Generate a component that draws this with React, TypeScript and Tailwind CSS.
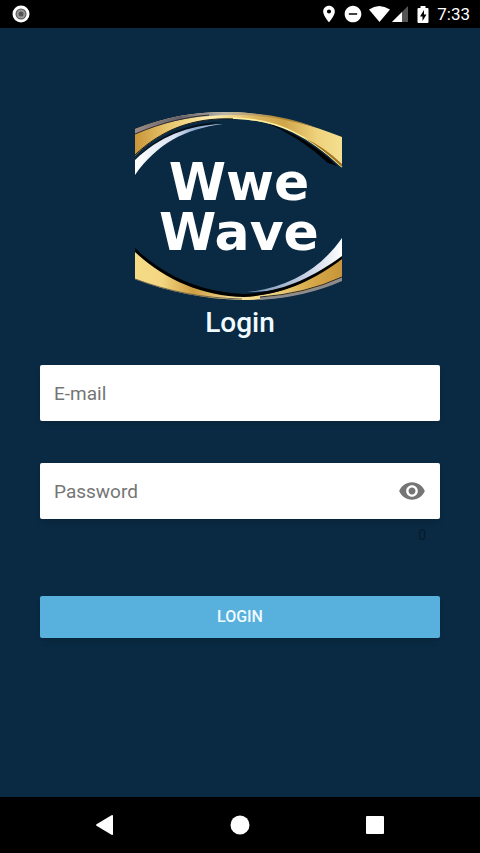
import { useState } from "react";
import { MdDoNotDisturbOn, MdLocationOn, MdRemoveRedEye } from "react-icons/md";

function StatusBar() {
  return (
    <header className="flex h-7 items-center justify-between bg-black pr-2.5 pl-3 text-white">
      <svg className="size-[18px]" viewBox="0 0 18 18" aria-hidden="true">
        <circle cx="9" cy="9" r="8.5" fill="#fff" />
        <circle cx="9" cy="9" r="5.5" fill="#555" />
        <circle cx="9" cy="9" r="4.5" fill="#999" />
        <circle cx="9" cy="9" r="2.5" fill="#555" />
      </svg>
      <div className="flex items-center">
        <MdLocationOn className="size-5" />
        <MdDoNotDisturbOn className="ml-1 size-5" />
        <svg className="ml-1.5 h-4 w-10" viewBox="0 0 40 16" aria-hidden="true">
          <path d="M0 3.5Q10-3.500 21 3.5L10.500 16Z" fill="#fff" />
          <path d="M23 16 39 0V16Z" fill="#555" />
          <path d="M23 16 33 6V16Z" fill="#fff" />
        </svg>
        <svg className="ml-2 h-[17px] w-3" viewBox="0 0 12 17" aria-hidden="true">
          <path
            d="M3.500 0h5v2H10.500Q11.500 2 11.500 3V16Q11.500 17 10.500 17H1.500Q.5 17 .5 16V3Q.5 2 1.500 2H3.500Z"
            fill="#fff"
          />
          <path d="M7 4 3 10.500H5.500V15L9.500 8.500H7Z" fill="#000" />
        </svg>
        <span className="ml-2 text-[17px] leading-5">7:33</span>
      </div>
    </header>
  );
}

function Logo() {
  return (
    <svg
      className="mr-0.5 h-[190px] w-52"
      viewBox="0 0 208 190"
      role="img"
      aria-label="Wwe Wave"
    >
      <defs>
        <linearGradient id="goldTop">
          <stop offset="0" stopColor="#c9953a" />
          <stop offset=".16" stopColor="#e8c66d" />
          <stop offset=".38" stopColor="#fff0b0" />
          <stop offset=".58" stopColor="#dcb55b" />
          <stop offset=".72" stopColor="#cfa54a" />
          <stop offset=".88" stopColor="#efd27c" />
          <stop offset="1" stopColor="#f4df91" />
        </linearGradient>
        <linearGradient id="goldBottom">
          <stop offset="0" stopColor="#f6dc86" />
          <stop offset=".13" stopColor="#f3d681" />
          <stop offset=".28" stopColor="#cf9f42" />
          <stop offset=".48" stopColor="#f5df98" />
          <stop offset=".65" stopColor="#f0d585" />
          <stop offset=".85" stopColor="#d6aa48" />
          <stop offset="1" stopColor="#c8953a" />
        </linearGradient>
        <linearGradient id="silverTop">
          <stop offset="0" stopColor="#fff" />
          <stop offset=".45" stopColor="#d9e2f2" />
          <stop offset=".7" stopColor="#8aa6cb" />
          <stop offset="1" stopColor="#c8d8e8" />
        </linearGradient>
        <linearGradient id="silverBottom">
          <stop offset="0" stopColor="#6f8ead" />
          <stop offset=".6" stopColor="#c3cee2" />
          <stop offset="1" stopColor="#fff" />
        </linearGradient>
        <linearGradient id="rim">
          <stop offset="0" stopColor="#9a8b85" />
          <stop offset=".25" stopColor="#66616a" />
          <stop offset=".5" stopColor="#bdb7aa" />
          <stop offset=".8" stopColor="#b68a35" />
          <stop offset="1" stopColor="#8d7340" />
        </linearGradient>
      </defs>

      <path d="M0 49C24 25 53 13 85 12Q38 21 0 58Z" fill="#03101b" />
      <path d="M0 50C24 27 52 15 88 14C49 19 22 34 0 65Z" fill="url(#silverTop)" />
      <path d="M130 12Q174 28 202 56L193 53Q165 27 130 12Z" fill="#000" />
      <path
        d="M0 19C32 6 64 1 100 2C136 4 170 12 207 27V57C174 27 144 10 100 9C57 7 25 21 0 46Z"
        fill="url(#goldTop)"
      />
      <path
        d="M0 19C32 6 64 1 100 2C133 4 156 8 180 17C151 9 128 5 100 5C60 5 31 11 0 24Z"
        fill="url(#rim)"
      />
      <path d="M0 24C28 12 52 7 74 5" fill="none" stroke="#302d30" />
      <path d="M0 45C25 21 57 7 98 9" fill="none" stroke="#17191b" />
      <path
        d="M98 8C144 9 175 27 207 57"
        fill="none"
        stroke="#fff0a0"
        strokeWidth="1.500"
      />
      <path d="M169 28Q187 38 207 57V54Q188 36 169 28Z" fill="#a0741f" />

      <path
        d="M207 128C184 161 151 178 112 182C152 182 181 170 207 149Z"
        fill="url(#silverBottom)"
      />
      <path
        d="M0 140C29 169 64 184 109 186C146 186 178 170 207 148V170C174 184 144 190 107 190C68 189 34 182 0 169Z"
        fill="url(#goldBottom)"
      />
      <path
        d="M0 138C30 167 67 182 109 184C147 182 177 168 207 146V149C178 171 147 185 109 187C66 186 29 169 0 142Z"
        fill="#000"
      />
      <path
        d="M0 169C35 182 68 188 107 189"
        fill="none"
        stroke="#6f6552"
      />
      <path d="M125 187Q170 185 207 167V171Q171 187 125 190Z" fill="#8d8b8c" />
      <path d="M125 187Q170 184 207 167" fill="none" stroke="#2c2d2e" />

      <g
        className="font-['DejaVu_Sans',sans-serif] text-[52px] font-bold"
        fill="#fff"
        textAnchor="middle"
      >
        <text x="104" y="90">Wwe</text>
        <text x="104" y="140">Wave</text>
      </g>
    </svg>
  );
}

function LoginForm() {
  const [password, setPassword] = useState("");
  const [visible, setVisible] = useState(false);

  return (
    <form
      className="mt-6 flex w-full flex-col"
      onSubmit={(event) => event.preventDefault()}
    >
      <input
        type="email"
        aria-label="E-mail"
        placeholder="E-mail"
        className="h-14 w-full rounded-xs bg-white px-3.5 text-[19px] text-gray-800 shadow-md outline-none placeholder:text-[#757575]"
      />
      <div className="mt-[42px] flex h-14 items-center rounded-xs bg-white pr-3.5 shadow-md">
        <input
          type={visible ? "text" : "password"}
          aria-label="Password"
          placeholder="Password"
          value={password}
          onChange={(event) => setPassword(event.target.value)}
          className="h-full min-w-0 flex-1 pl-3.5 text-[19px] text-gray-800 outline-none placeholder:text-[#757575]"
        />
        <button
          type="button"
          aria-label="Show password"
          onClick={() => setVisible(!visible)}
        >
          <MdRemoveRedEye className="size-7 text-[#757575]" />
        </button>
      </div>
      <output className="mt-1.5 pr-3.5 text-right text-sm leading-5 text-[#061b2c]">
        {password.length}
      </output>
      <button
        type="submit"
        className="mt-[51px] h-[42px] rounded-xs bg-[#58b0dd] text-base font-medium text-[#f0fbff] shadow-md"
      >
        LOGIN
      </button>
    </form>
  );
}

function NavigationBar() {
  return (
    <nav className="flex h-14 items-center justify-between bg-black px-[93px]">
      <button type="button" aria-label="Back">
        <svg className="size-6" viewBox="0 0 24 24" fill="#fff">
          <path d="M3.500 11.200 18.500 2.300Q20 1.700 20 3V21Q20 22.300 18.500 21.700L3.500 12.800Q2.500 12 3.500 11.200Z" />
        </svg>
      </button>
      <button type="button" aria-label="Home">
        <svg className="size-6" viewBox="0 0 24 24" fill="#fff">
          <circle cx="12" cy="12" r="9.500" />
        </svg>
      </button>
      <button type="button" aria-label="Recent apps">
        <svg className="size-6" viewBox="0 0 24 24" fill="#fff">
          <rect x="3" y="3" width="18" height="18" rx="1" />
        </svg>
      </button>
    </nav>
  );
}

export default function App() {
  return (
    <div className="flex min-h-screen flex-col bg-[#0a2a43] font-[Roboto,sans-serif]">
      <StatusBar />
      <main className="flex flex-1 flex-col items-center px-10 pt-[82px]">
        <Logo />
        <h1 className="mt-[5px] text-[28px] leading-9 font-medium text-[#f0fbff]">
          Login
        </h1>
        <LoginForm />
      </main>
      <NavigationBar />
    </div>
  );
}
